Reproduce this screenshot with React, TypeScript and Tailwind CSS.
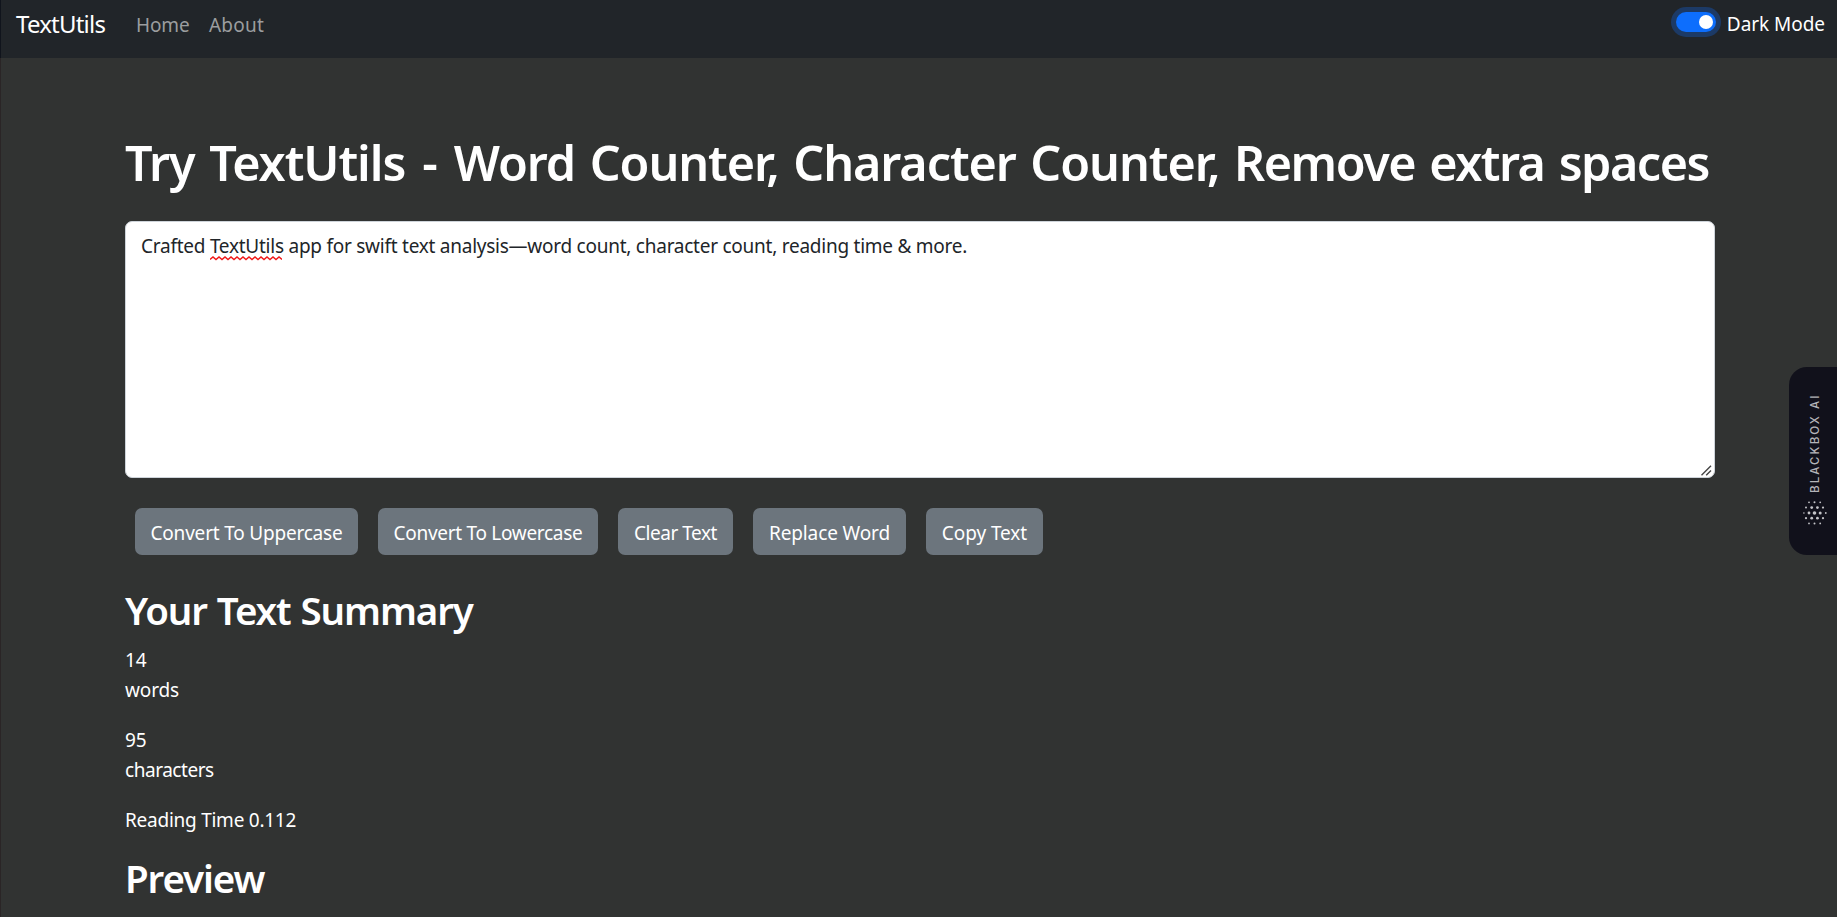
const buttons = [
  { label: 'Convert To Uppercase', cls: 'w-[223px] tracking-[-0.2px]' },
  { label: 'Convert To Lowercase', cls: 'w-[220px] tracking-[-0.29px]' },
  { label: 'Clear Text', cls: 'w-[115px] tracking-[-0.46px]' },
  { label: 'Replace Word', cls: 'w-[153px] tracking-[-0.12px]' },
  { label: 'Copy Text', cls: 'w-[117px] tracking-[-0.07px]' },
]

const dots: [number, number, number][] = [
  [6, 2.3, 0.9], [11.5, 2.3, 1], [17.2, 2.3, 0.9],
  [3, 7.6, 1], [8.7, 7.6, 1.4], [14.4, 7.6, 1.4], [20, 7.6, 1.1],
  [0.9, 13, 0.8], [6, 13, 1.4], [11.5, 13, 1.8], [17.2, 13, 1.5], [22.8, 13, 0.9],
  [3, 18.2, 1.1], [8.7, 18.2, 1.4], [14.4, 18.2, 1.4], [20, 18.2, 1.1],
  [6, 23.4, 0.9], [11.5, 23.4, 1], [17.2, 23.4, 0.9],
]

const squiggle = 'M0 3.5' + Array.from({ length: 12 }, (_, i) => ` L${i * 6 + 3} 1 L${i * 6 + 6} 3.5`).join('')

function Navbar() {
  return (
    <nav className="flex h-[58px] items-start justify-between border-l border-[#10141c] bg-[#212529] pl-[15px] pr-[12px] text-white">
      <div className="flex items-start">
        <a className="w-[120px] pt-[6px] text-[24px] leading-9 tracking-[-0.78px]">TextUtils</a>
        <a className="w-[73px] pt-[10px] text-[19px] leading-[30px] tracking-[-0.1px] text-[#9b9d9f]">Home</a>
        <a className="pt-[10px] text-[19px] leading-[30px] tracking-[0.23px] text-[#9b9d9f]">About</a>
      </div>
      <div className="flex items-start">
        <span className="mt-3 flex h-5 w-10 items-center justify-end rounded-full bg-[#0d6efd] pr-[3px] ring-[5px] ring-[#1c3a66]">
          <span className="size-[14px] rounded-full bg-white" />
        </span>
        <span className="ml-[11px] pt-[9px] text-[19px] leading-[30px] tracking-[-0.05px]">Dark Mode</span>
      </div>
    </nav>
  )
}

function TextBox() {
  return (
    <div className="relative mt-[29px] h-[257px] rounded-[7px] border border-[#ced4da] bg-white px-[15px] pt-[9px] text-[19px] leading-[30px] tracking-[-0.25px] text-[#212529]">
      Crafted{' '}
      <span className="relative">
        TextUtils
        <svg className="absolute left-0 top-[23px] h-[5px] w-[72px]" viewBox="0 0 72 5" fill="none" stroke="#f01818" strokeWidth="1.4">
          <path d={squiggle} />
        </svg>
      </span>{' '}
      app for swift text analysis—word count, character count, reading time &amp; more.
      <svg className="absolute bottom-[1px] right-[2px] size-[11px]" viewBox="0 0 11 11" fill="none" stroke="#444" strokeWidth="1.4">
        <path d="M0.5 10.2 L10 0.7 M5.2 10.2 L10 5.4" />
      </svg>
    </div>
  )
}

function BlackboxTab() {
  return (
    <aside className="absolute right-0 top-[367px] flex h-[188px] w-[48px] flex-col items-center rounded-l-[18px] bg-[#11111b] pt-[26px]">
      <span className="ml-[4px] h-[100px] rotate-180 whitespace-nowrap font-['Inter',sans-serif] text-[11.5px] font-medium leading-4 tracking-[2.1px] text-[#b4b4b8] [writing-mode:vertical-rl]">
        BLACKBOX AI
      </span>
      <svg className="ml-[4px] mt-[7px] h-[26px] w-[24px]" viewBox="0 0 24 26" fill="#c4c4c8">
        {dots.map(([x, y, r]) => <circle key={`${x}-${y}`} cx={x} cy={y} r={r} />)}
      </svg>
    </aside>
  )
}

export default function App() {
  return (
    <div className="relative h-[917px] overflow-hidden bg-[#313332] font-['Noto_Sans',sans-serif] text-white">
      <Navbar />
      <main className="h-[859px] border-l border-[#2a2526] pl-[124px] pr-[122px] pt-[74px]">
        <h1 className="whitespace-nowrap text-[48.5px] font-semibold leading-[60px] tracking-[-1.07px] [word-spacing:3px]">
          Try TextUtils <span className="mx-[2.5px]">-</span> Word Counter, Character Counter,{' '}
          <span className="tracking-[-1.48px]">Remove extra spaces</span>
        </h1>
        <TextBox />
        <div className="ml-[10px] mt-[30px] flex gap-5">
          {buttons.map((b) => (
            <button key={b.label} className={`h-[47px] whitespace-nowrap rounded-[7px] bg-[#6c757d] pt-[4px] text-[19px] ${b.cls}`}>
              {b.label}
            </button>
          ))}
        </div>
        <h2 className="mt-[31px] text-[38.5px] font-semibold leading-[48px] tracking-[-1.1px] [word-spacing:1px]">Your Text Summary</h2>
        <div className="mt-[11px] text-[19px] leading-[30px]">
          <p>14<br /><span className="tracking-[-0.15px]">words</span></p>
          <p className="mt-5">95<br /><span className="tracking-[-0.46px]">characters</span></p>
          <p className="mt-5 tracking-[-0.25px]">Reading Time 0.112</p>
        </div>
        <h2 className="mt-[19px] text-[38.5px] font-semibold leading-[48px] tracking-[-1.1px]">Preview</h2>
      </main>
      <BlackboxTab />
    </div>
  )
}
